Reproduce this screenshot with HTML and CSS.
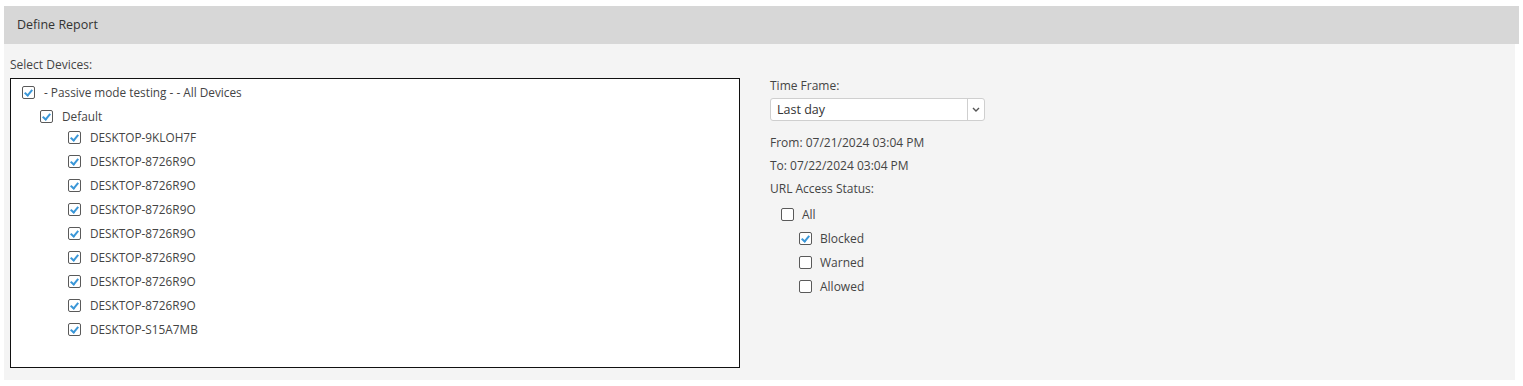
FILE: index.html
```html
<!DOCTYPE html>
<html lang="en">
<head>
  <meta charset="UTF-8" />
  <title>Define Report</title>
  <link rel="stylesheet" href="styles.css">
</head>
<body>
  <div class="report">
    <div class="report-header">Define Report</div>
    <div class="report-body">
      <div class="devices">
        <div class="label">Select Devices:</div>
        <div class="tree">
          <div class="node root"><span class="cb on"></span>- Passive mode testing - - All Devices</div>
          <div class="node group"><span class="cb on"></span>Default</div>
          <div class="node leaf first"><span class="cb on"></span>DESKTOP-9KLOH7F</div>
          <div class="node leaf"><span class="cb on"></span>DESKTOP-8726R9O</div>
          <div class="node leaf"><span class="cb on"></span>DESKTOP-8726R9O</div>
          <div class="node leaf"><span class="cb on"></span>DESKTOP-8726R9O</div>
          <div class="node leaf"><span class="cb on"></span>DESKTOP-8726R9O</div>
          <div class="node leaf"><span class="cb on"></span>DESKTOP-8726R9O</div>
          <div class="node leaf"><span class="cb on"></span>DESKTOP-8726R9O</div>
          <div class="node leaf"><span class="cb on"></span>DESKTOP-8726R9O</div>
          <div class="node leaf"><span class="cb on"></span>DESKTOP-S15A7MB</div>
        </div>
      </div>

      <div class="options">
        <div class="label">Time Frame:</div>
        <div class="select">
          <span class="select-value">Last day</span>
          <span class="select-arrow">
            <svg width="8" height="5" viewBox="0 0 8 5"><path d="M1 1l3 3 3-3" fill="none" stroke="#555" stroke-width="1.4"/></svg>
          </span>
        </div>
        <div class="line from">From: 07/21/2024 03:04 PM</div>
        <div class="line">To: 07/22/2024 03:04 PM</div>
        <div class="line">URL Access Status:</div>
        <div class="status">
          <div class="opt all"><span class="cb"></span>All</div>
          <div class="opt sub"><span class="cb on"></span>Blocked</div>
          <div class="opt sub"><span class="cb"></span>Warned</div>
          <div class="opt sub"><span class="cb"></span>Allowed</div>
        </div>
      </div>
    </div>
  </div>
</body>
</html>
```

FILE: styles.css
```css
body {
  margin: 0;
  background: white;
  font-family: 'Open Sans', sans-serif;
  font-size: 12px;
  color: #444;
}

.report {
  margin: 6px 4px 0 4px;
}

.report-header {
  background: #d7d7d7;
  height: 38px;
  line-height: 37px;
  padding-left: 13px;
  color: #333;
  font-size: 12.5px;
}

.report-body {
  background: #f4f4f4;
  margin-right: 4px;
  height: 336px;
  padding: 12px 6px 0 6px;
  box-sizing: border-box;
  display: flex;
}

.label {
  line-height: 17px;
}

.devices {
  width: 730px;
}

.tree {
  margin-top: 5px;
  height: 290px;
  box-sizing: border-box;
  border: 1px solid #111;
  background: white;
  padding: 1px 0 0 11px;
  font-size: 11.8px;
}

.node {
  display: flex;
  align-items: center;
  height: 24px;
}

.node .cb {
  margin-right: 9px;
}

.group {
  padding-left: 18px;
}

.leaf {
  padding-left: 46px;
}

.leaf.first {
  margin-top: -3px;
}

.cb {
  width: 11px;
  height: 11px;
  border: 1px solid #5a5a5a;
  border-radius: 2px;
  background: white;
  flex: none;
  position: relative;
}

.cb.on::after {
  content: "";
  position: absolute;
  left: 3px;
  top: 1px;
  width: 3px;
  height: 6px;
  border-right: 2px solid #3a97d8;
  border-bottom: 2px solid #3a97d8;
  transform: rotate(40deg);
}

.options {
  margin-left: 30px;
  padding-top: 21px;
}

.select {
  margin-top: 4px;
  width: 215px;
  height: 23px;
  box-sizing: border-box;
  border: 1px solid #cfcfcf;
  border-radius: 3px;
  background: white;
  display: flex;
  align-items: center;
  color: #333;
  font-size: 12.5px;
}

.select-value {
  flex: 1;
  padding-left: 6px;
}

.select-arrow {
  width: 16px;
  height: 100%;
  border-left: 1px solid #cfcfcf;
  display: flex;
  align-items: center;
  justify-content: center;
}

.line {
  line-height: 17px;
  margin-top: 6px;
}

.line.from {
  margin-top: 13px;
}

.status {
  margin-top: 5px;
}

.opt {
  display: flex;
  align-items: center;
  height: 24px;
}

.opt .cb {
  margin-right: 8px;
}

.all {
  padding-left: 11px;
}

.sub {
  padding-left: 29px;
}
```
